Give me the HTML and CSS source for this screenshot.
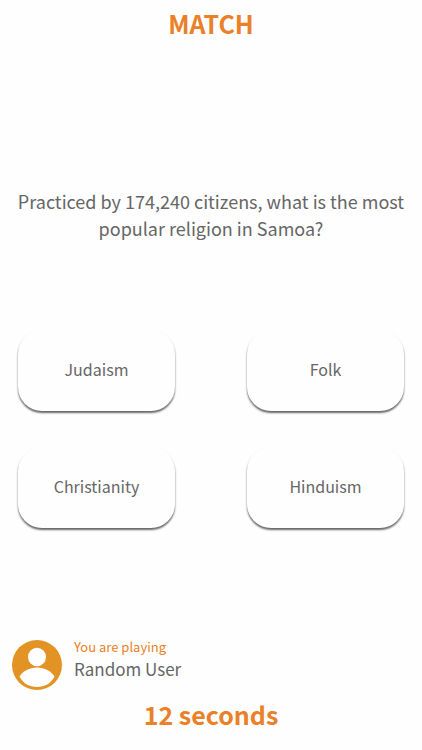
FILE: index.html
```html
<!DOCTYPE html>
<html lang="en">
<head>
<meta charset="utf-8">
<meta name="viewport" content="width=device-width, initial-scale=1">
<title>Match</title>
<link rel="stylesheet" href="styles.css">
</head>
<body>
<main class="game">
  <h1 class="title">MATCH</h1>
  <p class="question">Practiced by 174,240 citizens, what is the most popular religion in Samoa?</p>
  <div class="answers">
    <button class="answer" type="button">Judaism</button>
    <button class="answer" type="button">Folk</button>
    <button class="answer" type="button">Christianity</button>
    <button class="answer" type="button">Hinduism</button>
  </div>
  <footer class="footer">
    <div class="opponent">
      <svg class="avatar" viewBox="0 0 50 50" aria-hidden="true">
        <circle cx="25" cy="25" r="25" fill="#e39324"/>
        <ellipse cx="25" cy="17" rx="9" ry="9.3" fill="#fff"/>
        <path d="M7.500 36.500C11 31 17.500 27.500 25 27.500S39 31 42.500 36.500C39 43.500 32.500 47 25 47S11 43.500 7.500 36.500Z" fill="#fff"/>
      </svg>
      <div>
        <p class="label">You are playing</p>
        <p class="name">Random User</p>
      </div>
    </div>
    <p class="timer">12 seconds</p>
  </footer>
</main>
</body>
</html>
```
FILE: styles.css
```css
* {
  box-sizing: border-box;
}

body {
  margin: 0;
  background: #fefefe;
  color: #666;
  font-family: "Noto Sans CJK SC", "Open Sans", sans-serif;
}

h1,
p {
  margin: 0;
}

.game {
  display: flex;
  flex-direction: column;
  min-height: 100vh;
  padding: 5px 12px 18px;
}

.title,
.timer {
  color: #ea8027;
  font-size: 25px;
  font-weight: 700;
  line-height: 36px;
  text-align: center;
}

.question {
  margin-top: 147px;
  font-size: 18px;
  line-height: 27px;
  text-align: center;
}

.answers {
  display: grid;
  grid-template-columns: 1fr 1fr;
  gap: 36px 72px;
  margin-top: 88px;
  padding: 0 6px;
}

.answer {
  height: 81px;
  padding: 0 0 4px;
  border: 0;
  border-radius: 24px;
  background: #fefefe;
  box-shadow: 0 2px 2px rgba(0, 0, 0, 0.6);
  color: #666;
  font: inherit;
  font-size: 16px;
}

.footer {
  margin-top: auto;
}

.opponent {
  display: flex;
  align-items: center;
  gap: 12px;
  margin-bottom: 3px;
}

.avatar {
  width: 50px;
  height: 50px;
}

.label {
  color: #ea8027;
  font-size: 13px;
  line-height: 20px;
}

.name {
  padding-bottom: 12px;
  font-size: 17px;
  line-height: 24px;
}
```
